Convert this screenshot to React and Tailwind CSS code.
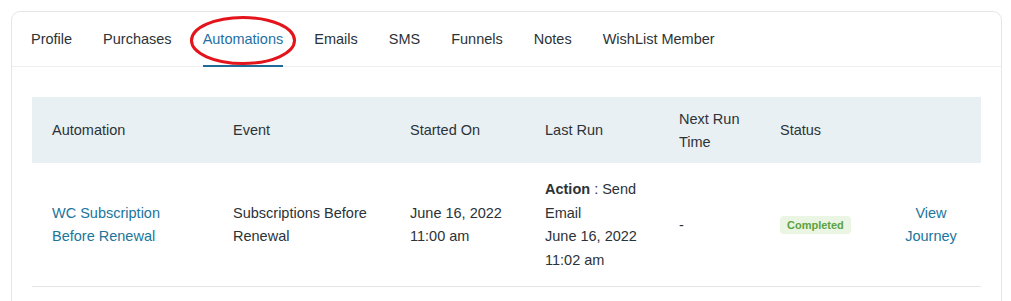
import React from "react";

const TABS = ["Profile", "Purchases", "Automations", "Emails", "SMS", "Funnels", "Notes", "WishList Member"];

function Tabs({ active }) {
  return (
    <div className="flex h-[55px] items-stretch border-b border-[#eeeeee] pl-[3.5px] pt-[2px]">
      {TABS.map((t) => {
        const on = t === active;
        return (
          <div key={t} className="relative flex items-center px-[15.5px]">
            <span className={on ? "text-[#1f6fa3]" : "text-[#2c3338]"}>{t}</span>
            {on && <span className="absolute bottom-[-1px] left-[15.5px] right-[15.5px] h-[2px] bg-[#1f6a99]" />}
            {on && (
              <svg className="pointer-events-none absolute left-[3px] top-[2px]" width="106" height="49" viewBox="0 0 106 49">
                <ellipse cx="53" cy="24.5" rx="51.5" ry="23" fill="none" stroke="#e3141b" strokeWidth="3" />
              </svg>
            )}
          </div>
        );
      })}
    </div>
  );
}

function AutomationsTable() {
  return (
    <table className="w-full table-fixed border-collapse text-left">
      <colgroup>
        <col className="w-[181px]" />
        <col className="w-[177px]" />
        <col className="w-[135px]" />
        <col className="w-[134px]" />
        <col className="w-[101px]" />
        <col className="w-[121px]" />
        <col />
      </colgroup>
      <thead>
        <tr className="h-[66px] bg-[#e9f0f3] text-[#2c3338]">
          <th className="pl-5 pt-[2px] font-normal">Automation</th>
          <th className="pl-5 pt-[2px] font-normal">Event</th>
          <th className="pl-5 pt-[2px] font-normal">Started On</th>
          <th className="pl-5 pt-[2px] font-normal">Last Run</th>
          <th className="pl-5 pr-2 pt-[2px] font-normal leading-[23px]">Next Run Time</th>
          <th className="pl-5 pt-[2px] font-normal">Status</th>
          <th />
        </tr>
      </thead>
      <tbody>
        <tr className="h-[123px] border-b border-[#e5e5e5] align-middle leading-[23.5px] text-[#2c3338]">
          <td className="pl-5 pr-4 pt-[2px]">
            <a className="text-[#21759b]">WC Subscription Before Renewal</a>
          </td>
          <td className="pl-5 pr-2 pt-[2px]">Subscriptions Before Renewal</td>
          <td className="pl-5 pr-2 pt-[2px]">June 16, 2022 11:00 am</td>
          <td className="pl-5 pr-2 pt-[2px]">
            <b>Action</b> : Send Email
            <br />
            June 16, 2022 11:02 am
          </td>
          <td className="pl-5 pt-[2px]">-</td>
          <td className="pl-5 pt-[2px]">
            <span className="rounded-[4px] bg-[#eaf5e3] px-[7px] py-[3px] text-[11px] font-bold text-[#5ba23f]">Completed</span>
          </td>
          <td className="px-5 pt-[2px] text-center">
            <a className="text-[#21759b]">View Journey</a>
          </td>
        </tr>
      </tbody>
    </table>
  );
}

export default function App() {
  return (
    <div className="h-[301px] overflow-hidden bg-white pl-[11px] pr-[9px] pt-[11px] font-['Liberation_Sans',Arial,sans-serif] text-[14.5px]">
      <div className="h-[320px] rounded-[9px] border border-[#e6e6e6] bg-white">
        <Tabs active="Automations" />
        <div className="px-5 pt-[30px]">
          <AutomationsTable />
        </div>
      </div>
    </div>
  );
}
